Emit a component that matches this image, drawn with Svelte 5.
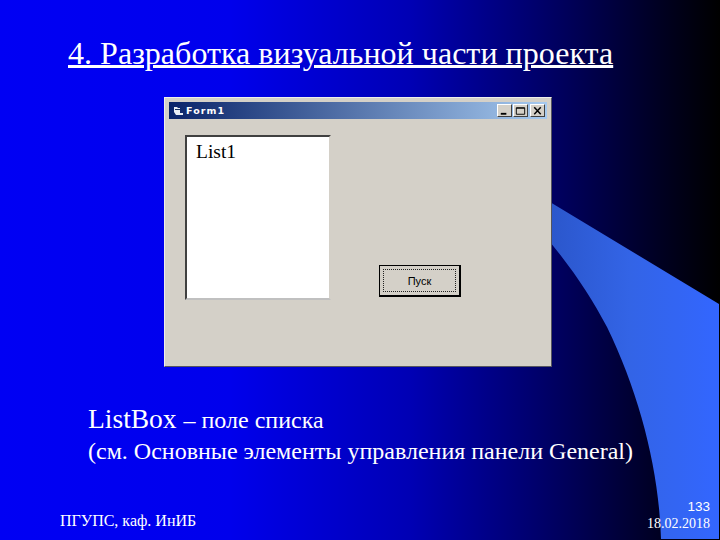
<script>
  const title = "4. Разработка визуальной части проекта";
</script>

<div class="slide">
  <svg class="wave" width="720" height="540" viewBox="0 0 720 540" aria-hidden="true">
    <defs>
      <linearGradient id="waveFill" x1="0" x2="1" y1="0" y2="0">
        <stop offset="0" stop-color="#2a55c8" />
        <stop offset="0.5" stop-color="#3364e6" />
        <stop offset="1" stop-color="#3366ff" />
      </linearGradient>
    </defs>
    <path d="M540 196 L719 304 L719 539 L661 539 C659 470 640 395 607 327 C590 295 570 265 540 230 Z" fill="url(#waveFill)" />
  </svg>

  <h1>{title}</h1>

  <div class="window">
    <div class="titlebar">
      <svg class="app-icon" width="12" height="10" viewBox="0 0 12 10" aria-hidden="true">
        <path d="M1 1h3l1 1h2v5h3v2H3L1 6z" fill="#e8eef6" />
        <path d="M2 3h5v1H2z" fill="#16305f" />
      </svg>
      <span class="caption">Form1</span>
      <div class="controls">
        <span class="ctl">
          <svg width="14" height="12" viewBox="0 0 14 12"><path d="M3 8h6v2H3z" fill="#000" /></svg>
        </span>
        <span class="ctl">
          <svg width="14" height="12" viewBox="0 0 14 12"><path d="M2.5 2.5h9v7h-9z M2.5 3h9" fill="none" stroke="#000" /></svg>
        </span>
        <span class="ctl close">
          <svg width="14" height="12" viewBox="0 0 14 12"><path d="M3.5 2l7 7.5M10.5 2l-7 7.5" fill="none" stroke="#000" stroke-width="1.6" /></svg>
        </span>
      </div>
    </div>
    <div class="client">
      <div class="listbox">List1</div>
      <div class="btn"><span class="btn-inner">Пуск</span></div>
    </div>
  </div>

  <p class="line1">ListBox <span class="small">– поле списка</span></p>
  <p class="line2">(см. Основные элементы управления панели General)</p>

  <footer>
    <span class="org">ПГУПС, каф. ИнИБ</span>
    <div class="meta">
      <span class="page">133</span>
      <span class="date">18.02.2018</span>
    </div>
  </footer>
</div>

<style>
  :global(body) {
    margin: 0;
    background: #000;
  }

  .slide {
    position: relative;
    width: 720px;
    height: 540px;
    overflow: hidden;
    box-sizing: border-box;
    display: flex;
    flex-direction: column;
    background: linear-gradient(90deg, #0000f4 0%, #0000ec 32%, #0000b4 57%, #00006a 75%, #000020 92%, #000 100%);
    font-family: "Liberation Serif", "Times New Roman", serif;
    color: #fff;
  }

  .wave {
    position: absolute;
    left: 0;
    top: 0;
  }

  h1 {
    position: relative;
    margin: 35px 0 0 68px;
    font-size: 32px;
    line-height: 36px;
    font-weight: 400;
    text-decoration: underline;
    text-decoration-thickness: 3px;
    text-underline-offset: 1px;
    letter-spacing: 0.03px;
    white-space: nowrap;
  }

  .window {
    position: relative;
    box-sizing: border-box;
    width: 388px;
    height: 270px;
    margin: 26px 0 0 164px;
    padding: 4px;
    background: #d4d0c8;
    border: 1px solid;
    border-color: #eeeeea #55555f #55555f #eeeeea;
  }

  .titlebar {
    display: flex;
    align-items: center;
    height: 17px;
    padding: 0 2px 0 4px;
    background: linear-gradient(90deg, #0a246a, #a6caf0);
    color: #fff;
  }

  .app-icon {
    margin-right: 1px;
  }

  .caption {
    font-family: "DejaVu Sans", sans-serif;
    font-size: 9.5px;
    font-weight: 700;
    letter-spacing: 1.1px;
  }

  .controls {
    margin-left: auto;
    display: flex;
    gap: 1px;
  }

  .ctl {
    display: flex;
    width: 15px;
    height: 13px;
    box-sizing: border-box;
    align-items: center;
    justify-content: center;
    background: #d4d0c8;
    border: 1px solid;
    border-color: #fff #404040 #404040 #fff;
  }

  .close {
    margin-left: 1px;
  }

  .client {
    position: relative;
    display: flex;
    align-items: flex-end;
    padding: 16px 0 0 16px;
  }

  .listbox {
    box-sizing: border-box;
    width: 146px;
    height: 165px;
    padding: 2px 0 0 9px;
    background: #fff;
    border: 2px solid;
    border-color: #404040 #d4d0c8 #c0c0c0 #404040;
    color: #000;
    font-size: 19.5px;
    line-height: 26px;
  }

  .btn {
    box-sizing: border-box;
    width: 82px;
    height: 32px;
    margin: 0 0 3px 48px;
    padding: 3px;
    background: #d4d0c8;
    border: 1px solid #000;
    border-right-width: 2px;
    border-bottom-width: 2px;
    color: #000;
  }

  .btn-inner {
    display: flex;
    height: 100%;
    box-sizing: border-box;
    align-items: center;
    justify-content: center;
    border: 1px dotted #222;
    font-family: "Liberation Sans", Arial, sans-serif;
    font-size: 11px;
  }

  p {
    position: relative;
    margin: 0;
    white-space: nowrap;
  }

  .line1 {
    margin: 36px 0 0 88px;
    font-size: 27.5px;
    line-height: 32px;
  }

  .small {
    font-size: 24px;
  }

  .line2 {
    margin: 1px 0 0 88px;
    font-size: 24px;
    line-height: 28px;
  }

  footer {
    position: relative;
    display: flex;
    justify-content: space-between;
    align-items: flex-end;
    margin-top: auto;
    padding: 0 10px 8px 60px;
  }

  .org {
    font-size: 16px;
    line-height: 16px;
    margin-bottom: 3px;
  }

  .meta {
    display: flex;
    flex-direction: column;
    align-items: flex-end;
    font-size: 14px;
    line-height: 17px;
  }

  .page {
    font-family: "Liberation Sans", Arial, sans-serif;
    font-size: 13.5px;
  }
</style>
